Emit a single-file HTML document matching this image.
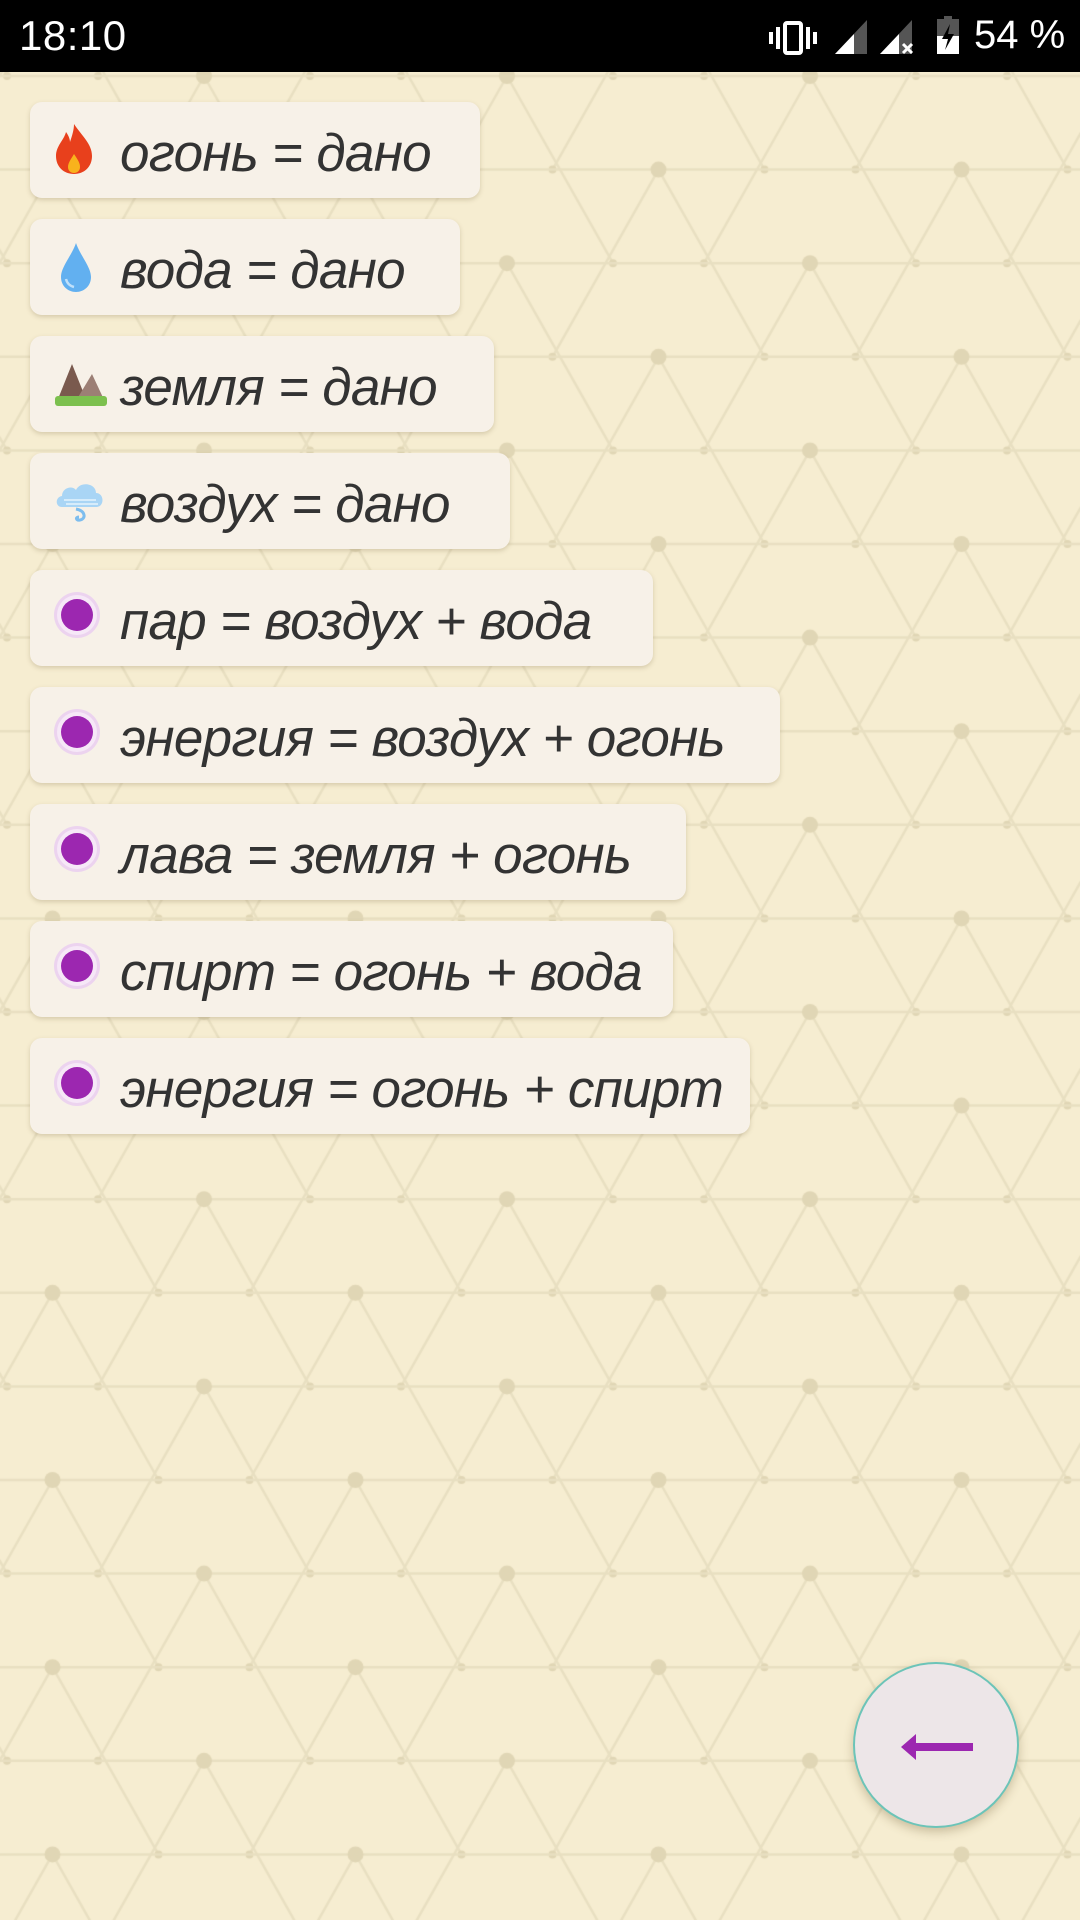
<!DOCTYPE html>
<html><head><meta charset="utf-8">
<style>
*{margin:0;padding:0;box-sizing:border-box}
body{width:1080px;height:1920px;overflow:hidden;background:#f6edd1;position:relative;font-family:"Liberation Sans",sans-serif}
#bg{position:absolute;left:0;top:0}
.sb{position:absolute;left:0;top:0;width:1080px;height:72px;background:#000;color:#fff}
.time{position:absolute;left:19px;top:12px;font-size:42px;letter-spacing:0.5px}
.pct{position:absolute;left:974px;top:13px;font-size:40px}
.card{position:absolute;left:30px;height:96px;background:#f7f1e8;border-radius:12px;box-shadow:0 2px 5px rgba(120,100,60,0.25)}
.card span{position:absolute;left:90px;top:21px;font-size:53px;letter-spacing:-0.7px;font-style:italic;color:#333;white-space:nowrap}
.card svg{position:absolute;left:22px;top:20px}
.fab{position:absolute;left:853px;top:1662px;width:166px;height:166px;border-radius:50%;background:#ede6e8;border:2px solid #6cc4b8;box-shadow:0 4px 10px rgba(100,80,40,0.3)}
</style></head><body>
<canvas id="bg" width="1080" height="1920"></canvas>
<div class="sb">
<div class="time">18:10</div>
<svg style="position:absolute;left:760px;top:16px" width="210" height="42" viewBox="0 0 210 42">
<rect x="9" y="16" width="4" height="12" fill="#fff"/><rect x="16" y="11" width="4" height="22" fill="#fff"/>
<rect x="25" y="7" width="16" height="30" rx="2" fill="none" stroke="#fff" stroke-width="4"/>
<rect x="46" y="11" width="4" height="22" fill="#fff"/><rect x="53" y="16" width="4" height="12" fill="#fff"/>
<polygon points="75,38 107,4 107,38" fill="#555"/><polygon points="75,38 94,18 94,38" fill="#fff"/>
<polygon points="120,38 152,4 152,38" fill="#555"/><polygon points="120,38 139,18 139,38" fill="#fff"/>
<path d="M143 28 L152 37 M152 28 L143 37" stroke="#fff" stroke-width="3"/>
<rect x="184" y="0" width="8" height="4" fill="#555"/>
<rect x="177" y="3" width="22" height="35" fill="#555"/><rect x="177" y="20" width="22" height="18" fill="#fff"/>
<polygon points="190,8 182,23 188,23 185,34 194,18 188,18" fill="#000"/>
</svg>
<div class="pct">54 %</div>
</div>

<div class="card" style="top:102px;width:450px"><svg width="44" height="54" viewBox="0 0 44 54"><path d="M22 2 C30 14 40 22 40 34 C40 45 32 52 22 52 C12 52 4 45 4 34 C4 24 12 18 14 10 C17 14 18 18 18 20 C20 14 22 8 22 2Z" fill="#e8401c"/><path d="M22 32 C26 38 28 41 28 45 C28 49 25 51 22 51 C19 51 16 49 16 45 C16 41 19 37 22 32Z" fill="#f9b21c"/></svg><span>огонь = дано</span></div>
<div class="card" style="top:219px;width:430px"><svg width="44" height="54" viewBox="0 0 44 54"><path d="M24 4 C28 16 39 28 39 38 C39 47 32 53 24 53 C16 53 9 47 9 38 C9 28 20 16 24 4Z" fill="#62b0f0"/><path d="M14 40 C15 44 18 47 22 48" stroke="#bfe0fa" stroke-width="2.5" fill="none"/></svg><span>вода = дано</span></div>
<div class="card" style="top:336px;width:464px"><svg width="56" height="54" viewBox="0 0 56 54"><polygon points="4,48 20,8 36,48" fill="#7a5a4e"/><polygon points="22,48 40,18 54,48" fill="#9c7f75"/><rect x="3" y="40" width="52" height="10" rx="3" fill="#7cc04e"/></svg><span>земля = дано</span></div>
<div class="card" style="top:453px;width:480px"><svg width="56" height="58" viewBox="0 0 56 58"><path d="M10 34 C3 34 3 24 10 23 C10 15 20 12 24 17 C28 8 44 10 44 20 C52 20 53 33 45 34Z" fill="#a9d5f5"/><path d="M12 27 H44 M14 31 H46" stroke="#d6ecfb" stroke-width="2"/><path d="M24 36 C34 38 34 46 28 47 C24 48 23 44 27 44" stroke="#7dbdee" stroke-width="3" fill="none"/></svg><span>воздух = дано</span></div>

<div class="card" style="top:570px;width:623px"><svg width="50" height="50" viewBox="0 0 50 50"><circle cx="25" cy="25" r="23" fill="#ecd3ef"/><circle cx="25" cy="25" r="20" fill="#f6e8f7"/><circle cx="25" cy="25" r="16" fill="#9c27b0"/></svg><span>пар = воздух + вода</span></div>
<div class="card" style="top:687px;width:750px"><svg width="50" height="50" viewBox="0 0 50 50"><circle cx="25" cy="25" r="23" fill="#ecd3ef"/><circle cx="25" cy="25" r="20" fill="#f6e8f7"/><circle cx="25" cy="25" r="16" fill="#9c27b0"/></svg><span>энергия = воздух + огонь</span></div>
<div class="card" style="top:804px;width:656px"><svg width="50" height="50" viewBox="0 0 50 50"><circle cx="25" cy="25" r="23" fill="#ecd3ef"/><circle cx="25" cy="25" r="20" fill="#f6e8f7"/><circle cx="25" cy="25" r="16" fill="#9c27b0"/></svg><span>лава = земля + огонь</span></div>
<div class="card" style="top:921px;width:643px"><svg width="50" height="50" viewBox="0 0 50 50"><circle cx="25" cy="25" r="23" fill="#ecd3ef"/><circle cx="25" cy="25" r="20" fill="#f6e8f7"/><circle cx="25" cy="25" r="16" fill="#9c27b0"/></svg><span>спирт = огонь + вода</span></div>
<div class="card" style="top:1038px;width:720px"><svg width="50" height="50" viewBox="0 0 50 50"><circle cx="25" cy="25" r="23" fill="#ecd3ef"/><circle cx="25" cy="25" r="20" fill="#f6e8f7"/><circle cx="25" cy="25" r="16" fill="#9c27b0"/></svg><span>энергия = огонь + спирт</span></div>

<div class="fab"><svg style="position:absolute;left:45px;top:68px" width="76" height="30" viewBox="0 0 76 30"><polygon points="1,15 16,2 16,11 73,11 73,19 16,19 16,28" fill="#9c27b0"/></svg></div>

<script>
var c=document.getElementById('bg').getContext('2d');
var h=93.6,W=303,dx=53;
c.strokeStyle='#e8dfc1';c.lineWidth=2.5;c.fillStyle='#e0d6b5';
for(var k=-12;k<10;k++){
 var y=1012+k*h;
 c.beginPath();c.moveTo(0,y);c.lineTo(1080,y);c.stroke();
 var off=(Math.abs(k)%2)?151.5:0;
 for(var n=-5;n<6;n++){
  var x=810+off+n*W;
  c.beginPath();c.moveTo(x,y);c.lineTo(x-2*dx,y+2*h);c.moveTo(x,y);c.lineTo(x+2*dx,y+2*h);c.stroke();
  c.beginPath();c.arc(x,y,8,0,7);c.fill();
  c.beginPath();c.arc(x-2*dx,y+2*h,4,0,7);c.arc(x+2*dx,y+2*h,4,0,7);c.fill();
 }
}
</script>
</body></html>
